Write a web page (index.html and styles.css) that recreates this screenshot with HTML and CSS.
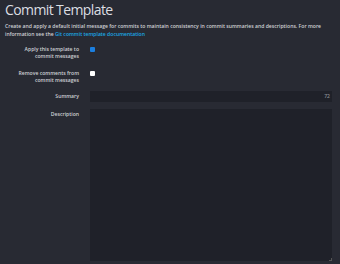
FILE: index.html
```html
<!DOCTYPE html>
<html lang="en">
<head>
    <meta charset="UTF-8">
    <title>Commit Template</title>
    <link rel="stylesheet" href="styles.css">
</head>
<body>
    <div class="page">
        <h1>Commit Template</h1>
        <p class="intro">
            Create and apply a default initial message for commits to maintain consistency in commit summaries and descriptions. For more<br>
            information see the <a href="#">Git commit template documentation</a>
        </p>

        <div class="form">
            <div class="row">
                <label class="label">Apply this template to<br>commit messages</label>
                <span class="check checked"></span>
            </div>

            <div class="row">
                <label class="label">Remove comments from<br>commit messages</label>
                <span class="check"></span>
            </div>

            <div class="row row-center">
                <label class="label">Summary</label>
                <div class="input"><span class="count">72</span></div>
            </div>

            <div class="row">
                <label class="label label-top">Description</label>
                <div class="textarea"><span class="grip"></span></div>
            </div>
        </div>
    </div>
</body>
</html>
```

FILE: styles.css
```css
* {
    margin: 0;
    padding: 0;
    box-sizing: border-box;
}

body {
    font-family: "Open Sans", sans-serif;
    background: #282a33;
    color: #d2d4d8;
    width: 340px;
    height: 264px;
    overflow: hidden;
}

.page {
    padding: 1px 8px 0 5px;
}

h1 {
    font-size: 14px;
    font-weight: 400;
    line-height: 18px;
    letter-spacing: -0.6px;
    color: #dcdee2;
}

.intro {
    font-size: 5.1px;
    font-weight: 600;
    line-height: 8px;
    margin-top: 2.5px;
    color: #cfd1d5;
    white-space: nowrap;
}

.intro a {
    color: #1ba9e6;
    text-decoration: none;
}

.form {
    display: flex;
    flex-direction: column;
    margin-top: 8px;
    font-size: 5.1px;
    font-weight: 600;
    line-height: 7px;
}

.row {
    display: flex;
    align-items: flex-start;
    gap: 11px;
}

.row + .row {
    margin-top: 10px;
}

.row-center {
    align-items: center;
}

.row-center,
.row-center + .row {
    margin-top: 7px !important;
}

.label {
    width: 74px;
    flex: none;
    text-align: right;
    color: #cfd1d5;
    white-space: nowrap;
}

.label-top {
    margin-top: 2.5px;
}

.check {
    width: 5px;
    height: 5px;
    margin-top: 1px;
    border-radius: 1px;
    background: #fff;
}

.checked {
    background: #1b7fe0;
}

.input {
    flex: 1;
    height: 11px;
    background: #1f2129;
    display: flex;
    align-items: center;
    justify-content: flex-end;
    padding-right: 2px;
}

.count {
    color: #8a8c93;
}

.textarea {
    flex: 1;
    height: 152px;
    background: #1f2129;
    position: relative;
}

.grip {
    position: absolute;
    right: 0;
    bottom: 0;
    width: 3px;
    height: 3px;
    border-right: 1px solid #555;
    border-bottom: 1px solid #555;
}
```
